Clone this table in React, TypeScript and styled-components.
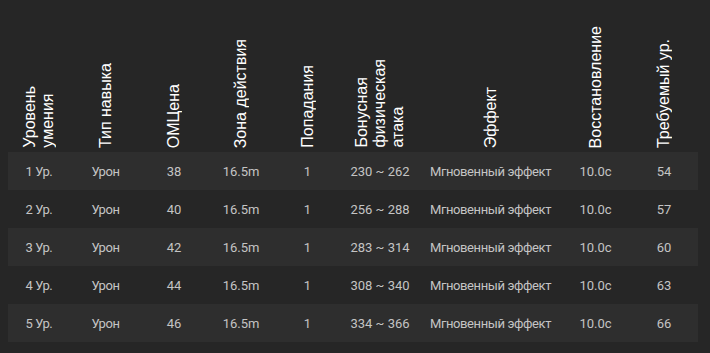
import styled, { createGlobalStyle } from "styled-components";

const GlobalStyle = createGlobalStyle`
  html, body {
    margin: 0;
    background: #262626;
  }
  body {
    padding: 0 8px;
    font-family: Roboto, "Open Sans", sans-serif;
  }
`;

const Table = styled.table`
  width: 690px;
  border-collapse: collapse;
  table-layout: fixed;
`;

const HeadCell = styled.th`
  height: 152px;
  padding: 0 0 4px;
  vertical-align: bottom;
  text-align: center;
  font-family: "Liberation Sans", Arial, sans-serif;
  font-weight: normal;
  font-size: 16px;
  line-height: 18px;
  color: #ffffff;
  box-sizing: border-box;
`;

const Vertical = styled.span`
  display: inline-block;
  vertical-align: bottom;
  writing-mode: vertical-rl;
  transform: rotate(180deg);
  white-space: nowrap;
  text-align: start;
`;

const Row = styled.tr<{ $striped: boolean }>`
  background: ${(p) => (p.$striped ? "#2e2e2e" : "transparent")};
`;

const Cell = styled.td<{ $narrow?: boolean }>`
  height: 38px;
  padding: 0;
  text-align: center;
  font-size: 13px;
  letter-spacing: ${(p) => (p.$narrow ? "-0.4px" : "0")};
  color: #c4c4c4;
  white-space: nowrap;
`;

const widths = [62, 71, 66, 68, 65, 80, 141, 69, 68];

const headers: string[][] = [
  ["Уровень", "умения"],
  ["Тип навыка"],
  ["ОМЦена"],
  ["Зона действия"],
  ["Попадания"],
  ["Бонусная", "физическая", "атака"],
  ["Эффект"],
  ["Восстановление"],
  ["Требуемый ур."],
];

const rows = [
  { lvl: 1, mp: 38, atk: "230 ~ 262", req: 54 },
  { lvl: 2, mp: 40, atk: "256 ~ 288", req: 57 },
  { lvl: 3, mp: 42, atk: "283 ~ 314", req: 60 },
  { lvl: 4, mp: 44, atk: "308 ~ 340", req: 63 },
  { lvl: 5, mp: 46, atk: "334 ~ 366", req: 66 },
];

export default function App() {
  return (
    <>
      <GlobalStyle />
      <Table>
        <colgroup>
          {widths.map((w, i) => (
            <col key={i} style={{ width: w }} />
          ))}
        </colgroup>
        <thead>
          <tr>
            {headers.map((lines, i) => (
              <HeadCell key={i}>
                <Vertical>
                  {lines.map((l, j) => (
                    <span key={j}>
                      {j > 0 && <br />}
                      {l}
                    </span>
                  ))}
                </Vertical>
              </HeadCell>
            ))}
          </tr>
        </thead>
        <tbody>
          {rows.map((r, i) => (
            <Row key={r.lvl} $striped={i % 2 === 0}>
              <Cell $narrow>{r.lvl} Ур.</Cell>
              <Cell $narrow>Урон</Cell>
              <Cell>{r.mp}</Cell>
              <Cell>16.5m</Cell>
              <Cell>1</Cell>
              <Cell>{r.atk}</Cell>
              <Cell $narrow>Мгновенный эффект</Cell>
              <Cell>10.0с</Cell>
              <Cell>{r.req}</Cell>
            </Row>
          ))}
        </tbody>
      </Table>
    </>
  );
}
